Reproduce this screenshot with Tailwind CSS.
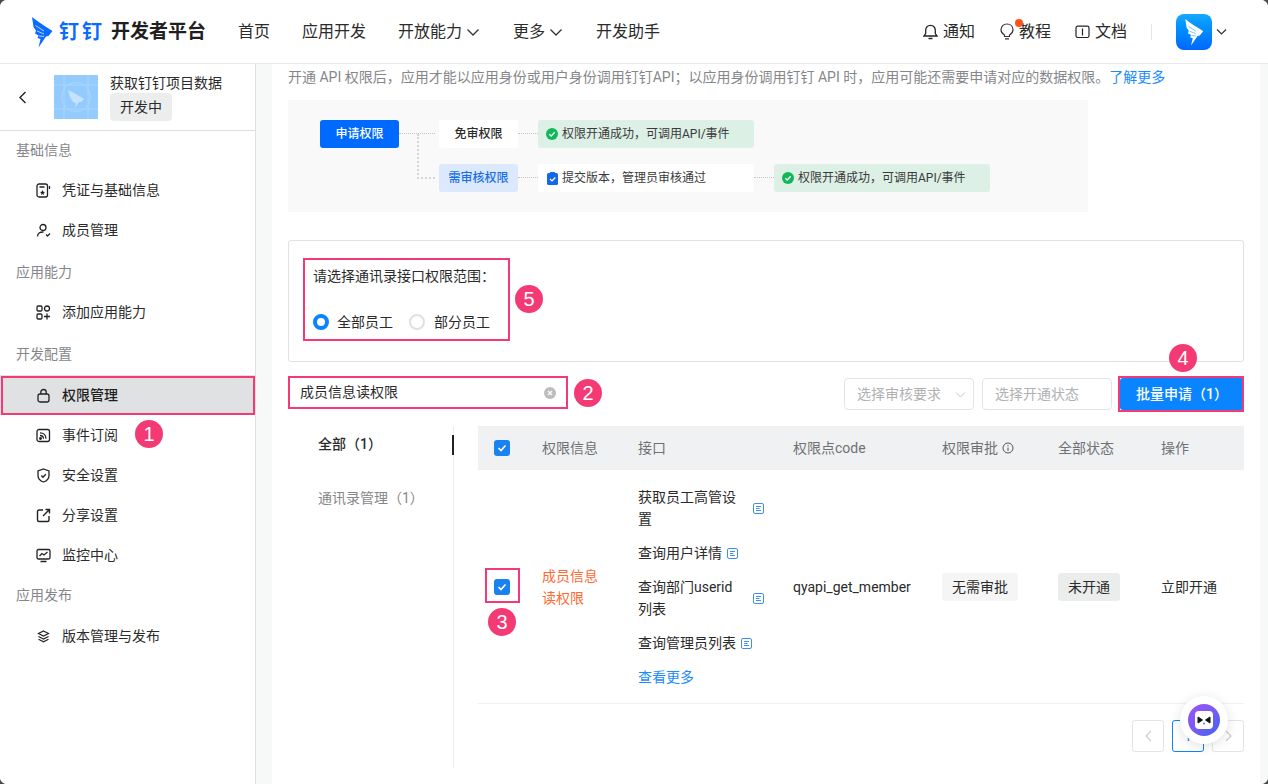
<!DOCTYPE html>
<html lang="zh-CN">
<head>
  <meta charset="UTF-8" />
  <title>钉钉开发者平台 – 权限管理</title>
  <script src="https://cdn.jsdelivr.net/npm/@tailwindcss/browser@4"></script>
</head>
<body class="bg-[#4a4a4a] font-['Roboto','Noto_Sans_CJK_SC',sans-serif] text-[14px] text-[#2b2b2b]">
<div class="relative w-[1268px] h-[784px] overflow-hidden rounded-[7px] bg-white">

  <!-- top bar -->
  <header class="h-[64px] flex items-center border-b border-[#e8e9ea] bg-white">
    <div class="flex items-center w-[238px] pl-[32px] shrink-0">
      <svg class="w-[21px] h-[32px]" viewBox="0 0 21 32"><path d="M0 1 C6 6 13 10 20.500 15 L16.500 20 L14 20.500 L6.500 31.500 L8.500 23 L5.500 22 L6.500 19.500 L3 17.500 L4 14.500 L1.500 11 Z" fill="#0a6cff"/><path d="M3.500 9.500 L12 15 M5 15 L12 18 M7 20 L12 20.500" fill="none" stroke="#fff" stroke-width="0.700"/></svg>
      <span class="ml-[6px] text-[20px] leading-none font-bold text-[#0a6cff] tracking-[3px]">钉钉</span>
      <span class="ml-[6px] text-[19px] leading-none font-bold text-[#1f1f1f]">开发者平台</span>
    </div>
    <nav class="flex items-center gap-[32px] text-[16px] text-[#2b2b2b]">
      <a>首页</a>
      <a>应用开发</a>
      <a class="flex items-center gap-[4px]">开放能力
        <svg class="w-[14px] h-[14px]" viewBox="0 0 14 14" fill="none" stroke="#333" stroke-width="1.300"><path d="M1.500 4.500 L7 10 L12.500 4.500"/></svg>
      </a>
      <a class="flex items-center gap-[4px] ml-[1px]">更多
        <svg class="w-[14px] h-[14px]" viewBox="0 0 14 14" fill="none" stroke="#333" stroke-width="1.300"><path d="M1.500 4.500 L7 10 L12.500 4.500"/></svg>
      </a>
      <a class="ml-[1px]">开发助手</a>
    </nav>
    <div class="ml-auto flex items-center text-[16px] pr-[41px]">
      <span class="flex items-center gap-[5px]">
        <svg class="w-[15px] h-[16px]" viewBox="0 0 15 16" fill="none" stroke="#222" stroke-width="1.300"><path d="M1 12 H14 L12.300 9.500 V6.500 C12.300 3.500 10.300 1.300 7.500 1.300 C4.700 1.300 2.700 3.500 2.700 6.500 V9.500 Z M5.500 14.500 H9.500"/></svg>
        通知
      </span>
      <span class="relative flex items-center gap-[5px] ml-[25px]">
        <svg class="w-[14px] h-[17px]" viewBox="0 0 14 17" fill="none" stroke="#333" stroke-width="1.200"><path d="M4.500 12 C2.500 10.800 1 9 1 6.800 C1 3.500 3.500 1 7 1 C10.500 1 13 3.500 13 6.800 C13 9 11.500 10.800 9.500 12 V13.500 H4.500 Z M5 15.800 H9"/></svg>
        教程
        <i class="absolute left-[15px] -top-[1px] w-[8px] h-[8px] rounded-full bg-[#ff5219]"></i>
      </span>
      <span class="flex items-center gap-[5px] ml-[24px]">
        <svg class="w-[15px] h-[14px]" viewBox="0 0 15 14" fill="none" stroke="#222" stroke-width="1.200"><rect x="1" y="1.200" width="13" height="11.300" rx="1.800"/><path d="M7.500 3.500 V10.500"/></svg>
        文档
      </span>
      <i class="w-px h-[16px] bg-[#e3e4e5] ml-[24px]"></i>
      <span class="ml-[24px] w-[36px] h-[36px] rounded-[8px] bg-gradient-to-b from-[#18a8ff] to-[#0066ff] flex items-center justify-center">
        <svg class="w-[21px] h-[28px]" viewBox="0 0 21 32"><path d="M0 1 C6 6 13 10 20.500 15 L16.500 20 L14 20.500 L6.500 31.500 L8.500 23 L5.500 22 L6.500 19.500 L3 17.500 L4 14.500 L1.500 11 Z" fill="#fff"/><path d="M3.500 9.500 L12 15 M5 15 L12 18 M7 20 L12 20.500" fill="none" stroke="#4aa8ff" stroke-width="0.800"/></svg>
      </span>
      <svg class="w-[11px] h-[11px] ml-[4px]" viewBox="0 0 11 11" fill="none" stroke="#333" stroke-width="1.200"><path d="M1 3.500 L5.500 8 L10 3.500"/></svg>
    </div>
  </header>

  <div class="flex h-[720px]">
    <!-- sidebar -->
    <aside class="w-[256px] shrink-0 border-r border-[#dfe0e1] bg-white">
      <div class="h-[67px] flex items-center border-b border-[#dcdddf] pl-[18px]">
        <svg class="w-[9px] h-[13px]" viewBox="0 0 9 13" fill="none" stroke="#222" stroke-width="1.400"><path d="M7.500 1 L2 6.500 L7.500 12"/></svg>
        <div class="relative ml-[27px] w-[44px] h-[44px] bg-[#93cbfd] overflow-hidden flex items-center justify-center">
          <svg class="w-[44px] h-[44px]" viewBox="0 0 44 44" fill="none" stroke="#b4dbfe" stroke-width="0.700"><circle cx="22" cy="22" r="14.500"/><path d="M0 10 H44 M0 34 H44 M10 0 V44 M34 0 V44"/><path d="M14 15 C20 18 25 21 30 24 L27 27 L25 27 L21 33 L22 28 L19 27 L16 22 Z" fill="#c5e3fe" stroke="none"/></svg>
        </div>
        <div class="ml-[12px]">
          <div class="text-[14px] leading-[20px] text-[#2b2b2b] -mt-[1px]">获取钉钉项目数据</div>
          <div class="w-[62px] h-[28px] rounded-[4px] bg-[#eceded] text-center leading-[28px]">开发中</div>
        </div>
      </div>

      <div class="text-[14px]">
        <div class="h-[39px] pl-[16px] flex items-center text-[#85878a]">基础信息</div>
        <div class="h-[40px] pl-[36px] flex items-center gap-[11px]">
          <svg class="w-[15px] h-[15px]" viewBox="0 0 15 15" fill="none" stroke="#222" stroke-width="1.300"><rect x="1" y="1" width="10.500" height="13" rx="2"/><path d="M3.500 4 H8.500"/><path d="M6.500 7 L7.300 8.800 L9 9 L7.700 10.200 L8 12 L6.500 11 L5 12 L5.300 10.200 L4 9 L5.700 8.800 Z" fill="#222" stroke="none"/><path d="M13.500 3 V6"/></svg>
          <span>凭证与基础信息</span>
        </div>
        <div class="h-[40px] pl-[36px] flex items-center gap-[11px]">
          <svg class="w-[15px] h-[15px]" viewBox="0 0 15 15" fill="none" stroke="#222" stroke-width="1.300"><circle cx="7" cy="4.500" r="3"/><path d="M1.500 13.500 C1.500 10.500 4 8.800 7.500 9 M10 11.500 L11.500 13 L14 10.500"/></svg>
          <span>成员管理</span>
        </div>
        <div class="h-[40px] mt-[2px] pl-[16px] flex items-center text-[#85878a]">应用能力</div>
        <div class="h-[40px] pl-[36px] flex items-center gap-[11px]">
          <svg class="w-[15px] h-[15px]" viewBox="0 0 15 15" fill="none" stroke="#222" stroke-width="1.300"><rect x="1" y="1" width="5" height="5" rx="1.200"/><circle cx="11" cy="3.500" r="2.500"/><rect x="1" y="9" width="5" height="5" rx="1.200"/><path d="M11 8.500 V14.500 M8 11.500 H14"/></svg>
          <span>添加应用能力</span>
        </div>
        <div class="h-[40px] mt-[2px] pl-[16px] flex items-center text-[#85878a]">开发配置</div>
        <div class="h-[40px] mt-[1px] pl-[36px] flex items-center gap-[11px] bg-[#e0e1e3]">
          <svg class="w-[15px] h-[15px]" viewBox="0 0 15 15" fill="none" stroke="#222" stroke-width="1.300"><rect x="2" y="6" width="11" height="8" rx="2"/><path d="M4.800 6 V4 C4.800 2.500 6 1.500 7.500 1.500 C9 1.500 10.200 2.500 10.200 4 V6"/></svg>
          <span class="font-medium text-[#1f1f1f]">权限管理</span>
        </div>
        <div class="h-[40px] pl-[36px] flex items-center gap-[11px]">
          <svg class="w-[15px] h-[15px]" viewBox="0 0 15 15" fill="none" stroke="#222" stroke-width="1.300"><rect x="1" y="1.500" width="12.500" height="12" rx="2"/><path d="M4 4.800 C7.500 4.800 10 7.300 10 10.800 M4 7.500 C6 7.500 7.500 9 7.500 10.800"/><circle cx="4.500" cy="10.500" r="0.800" fill="#222"/></svg>
          <span>事件订阅</span>
        </div>
        <div class="h-[40px] pl-[36px] flex items-center gap-[11px]">
          <svg class="w-[15px] h-[15px]" viewBox="0 0 15 15" fill="none" stroke="#222" stroke-width="1.300"><path d="M7.500 1 L13 3 V7.500 C13 10.800 10.500 13 7.500 14 C4.500 13 2 10.800 2 7.500 V3 Z M5.300 7.500 L7 9.200 L9.800 6.300"/></svg>
          <span>安全设置</span>
        </div>
        <div class="h-[40px] pl-[36px] flex items-center gap-[11px]">
          <svg class="w-[15px] h-[15px]" viewBox="0 0 15 15" fill="none" stroke="#222" stroke-width="1.400"><path d="M7 2 H3 Q1.500 2 1.500 3.500 V12 Q1.500 13.500 3 13.500 H11.500 Q13 13.500 13 12 V8 M7 8 L13.500 1.500 M9.500 1.500 H13.500 V5.500"/></svg>
          <span>分享设置</span>
        </div>
        <div class="h-[40px] pl-[36px] flex items-center gap-[11px]">
          <svg class="w-[15px] h-[15px]" viewBox="0 0 15 15" fill="none" stroke="#222" stroke-width="1.300"><rect x="1" y="1.500" width="13" height="9.500" rx="1.500"/><path d="M3.500 8 L6 5.500 L8 7 L11.500 4 M4.500 13.500 H10.500"/></svg>
          <span>监控中心</span>
        </div>
        <div class="h-[41px] pl-[16px] flex items-center text-[#85878a]">应用发布</div>
        <div class="h-[40px] pl-[36px] flex items-center gap-[11px]">
          <svg class="w-[15px] h-[15px]" viewBox="0 0 15 15" fill="none" stroke="#222" stroke-width="1.200"><path d="M7.500 2 L12.500 4.500 L7.500 7 L2.500 4.500 Z M2.500 7.500 L7.500 10 L12.500 7.500 M2.500 10.300 L7.500 12.800 L12.500 10.300"/></svg>
          <span>版本管理与发布</span>
        </div>
      </div>
    </aside>

    <!-- page body -->
    <main class="flex-1 bg-[#f7f8f8] pl-[16px] pr-[8px]">
      <div class="h-full bg-white px-[16px]">
        <p class="h-[26px] leading-[26px] text-[#85878a] whitespace-nowrap">开通 API 权限后，应用才能以应用身份或用户身份调用钉钉API；以应用身份调用钉钉 API 时，应用可能还需要申请对应的数据权限。<a class="text-[#1a8cff]">了解更多</a></p>

        <!-- flow diagram -->
        <div class="mt-[10px] w-[800px] h-[112px] bg-[#f9f9fa] pl-[32px] pt-[20px] text-[12px]">
          <div class="flex items-start">
            <div class="w-[79px] h-[28px] rounded-[3px] bg-[#006aff] text-white font-medium flex items-center justify-center">申请权限</div>
            <div class="relative w-[40px] h-[28px] shrink-0">
              <i class="absolute left-0 right-[4px] top-[13px] border-t border-dotted border-[#c4c5c7]"></i>
              <i class="absolute left-[18px] top-[14px] h-[45px] w-[18px] border-l-2 border-b-2 border-dotted border-[#d5d6d8]"></i>
            </div>
            <div class="w-[79px] h-[28px] rounded-[3px] bg-white font-medium flex items-center justify-center">免审权限</div>
            <i class="w-[20px] mt-[13px] border-t border-dotted border-[#c4c5c7]"></i>
            <div class="w-[216px] h-[28px] rounded-[3px] bg-[#dcf0e5] flex items-center pl-[8px] gap-[4px] text-[#3a3a3a]">
              <svg class="w-[12px] h-[12px]" viewBox="0 0 12 12"><circle cx="6" cy="6" r="6" fill="#10b858"/><path d="M3.300 6.200 L5.200 8 L8.700 4.300" fill="none" stroke="#fff" stroke-width="1.300"/></svg>
              权限开通成功，可调用API/事件
            </div>
          </div>
          <div class="flex items-start mt-[16px] pl-[119px]">
            <div class="w-[79px] h-[28px] rounded-[3px] bg-[#dce8fb] text-[#1a6fe8] font-medium flex items-center justify-center">需审核权限</div>
            <i class="w-[20px] mt-[13px] border-t border-dotted border-[#c4c5c7]"></i>
            <div class="w-[216px] h-[28px] rounded-[3px] bg-white flex items-center pl-[9px] gap-[4px] text-[#3a3a3a]">
              <svg class="w-[11px] h-[13px]" viewBox="0 0 11 13"><rect x="0" y="1" width="11" height="12" rx="1.500" fill="#1269e8"/><rect x="3" y="0" width="5" height="2.500" rx="0.500" fill="#1269e8"/><path d="M3 7 L5 9 L8.300 5.500" fill="none" stroke="#fff" stroke-width="1.200"/></svg>
              提交版本，管理员审核通过
            </div>
            <i class="w-[20px] mt-[13px] border-t border-dotted border-[#c4c5c7]"></i>
            <div class="w-[216px] h-[28px] rounded-[3px] bg-[#dcf0e5] flex items-center pl-[8px] gap-[4px] text-[#3a3a3a]">
              <svg class="w-[12px] h-[12px]" viewBox="0 0 12 12"><circle cx="6" cy="6" r="6" fill="#10b858"/><path d="M3.300 6.200 L5.200 8 L8.700 4.300" fill="none" stroke="#fff" stroke-width="1.300"/></svg>
              权限开通成功，可调用API/事件
            </div>
          </div>
        </div>

        <!-- scope card -->
        <div class="mt-[28px] h-[122px] rounded-[3px] border border-[#e0e1e2] pl-[24px] pt-[25px]">
          <div class="leading-[20px]">请选择通讯录接口权限范围：</div>
          <div class="mt-[26px] flex items-center h-[20px]">
            <i class="w-[16px] h-[16px] rounded-full border-[4px] border-[#0a84ff] bg-white"></i>
            <span class="ml-[8px]">全部员工</span>
            <i class="ml-[16px] w-[16px] h-[16px] rounded-full border-2 border-[#dfe0e1] bg-white"></i>
            <span class="ml-[9px]">部分员工</span>
          </div>
        </div>

        <!-- filters -->
        <div class="mt-[14px] h-[36px] flex items-start">
          <div class="w-[280px] h-[33px] flex items-center pl-[12px] pr-[12px]">
            <span>成员信息读权限</span>
            <i class="ml-auto w-[12px] h-[12px] rounded-full bg-[#bcbdbf] flex items-center justify-center">
              <svg class="w-[6px] h-[6px]" viewBox="0 0 6 6" stroke="#fff" stroke-width="1.200"><path d="M1 1 L5 5 M5 1 L1 5"/></svg>
            </i>
          </div>
          <div class="ml-auto flex items-start pt-[2px]">
            <div class="w-[130px] h-[32px] rounded-[4px] border border-[#e3e4e5] flex items-center pl-[12px] text-[#b0b1b3]">
              选择审核要求
              <svg class="ml-[14px] w-[11px] h-[11px]" viewBox="0 0 11 11" fill="none" stroke="#c4c5c7" stroke-width="1"><path d="M1 3.500 L5.500 8 L10 3.500"/></svg>
            </div>
            <div class="ml-[8px] w-[130px] h-[32px] rounded-[4px] border border-[#e3e4e5] flex items-center pl-[12px] text-[#b0b1b3]">选择开通状态</div>
            <div class="ml-[8px] w-[124px] h-[32px] rounded-[3px] bg-[#0a84ff] text-white font-medium flex items-center justify-center">批量申请（1）</div>
          </div>
        </div>

        <!-- tabs + table -->
        <div class="mt-[14px] flex">
          <div class="relative w-[166px] h-[342px] border-r border-[#eeeeef] pl-[30px] shrink-0">
            <div class="h-[36px] leading-[36px] font-medium">全部（1）</div>
            <div class="mt-[18px] h-[36px] leading-[36px] text-[#85878a]">通讯录管理（1）</div>
            <i class="absolute right-[-1px] top-[9px] w-[2px] h-[20px] bg-[#222]"></i>
          </div>
          <div class="ml-[24px] flex-1">
            <div class="grid grid-cols-[64px_96px_155px_149px_116px_103px_83px] h-[44px] items-center bg-[#f0f1f2] text-[#6f7174]">
              <div class="pl-[16px]">
                <span class="w-[16px] h-[16px] rounded-[3px] bg-[#1a82f0] flex items-center justify-center">
                  <svg class="w-[10px] h-[10px]" viewBox="0 0 10 10" fill="none" stroke="#fff" stroke-width="1.600"><path d="M1.500 5 L4 7.500 L8.500 2.500"/></svg>
                </span>
              </div>
              <div>权限信息</div>
              <div>接口</div>
              <div>权限点code</div>
              <div class="flex items-center gap-[4px]">权限审批
                <svg class="w-[12px] h-[12px]" viewBox="0 0 12 12" fill="none" stroke="#555" stroke-width="1"><circle cx="6" cy="6" r="5"/><path d="M6 5.500 V9 M6 3 V4.200"/></svg>
              </div>
              <div>全部状态</div>
              <div>操作</div>
            </div>
            <div class="grid grid-cols-[64px_96px_155px_149px_116px_103px_83px] items-center border-b border-[#f0f1f2] pt-[16px] pb-[15px]">
              <div class="pl-[16px]">
                <span class="w-[16px] h-[16px] rounded-[3px] bg-[#1a82f0] flex items-center justify-center">
                  <svg class="w-[10px] h-[10px]" viewBox="0 0 10 10" fill="none" stroke="#fff" stroke-width="1.600"><path d="M1.500 5 L4 7.500 L8.500 2.500"/></svg>
                </span>
              </div>
              <div class="w-[60px] leading-[22px] text-[#ff6a33]">成员信息读权限</div>
              <div class="leading-[22px] flex flex-col gap-[12px]">
                <div class="flex items-center"><span class="w-[110px]">获取员工高管设置</span>
                  <svg class="ml-[5px] w-[11px] h-[11px]" viewBox="0 0 11 11" fill="none" stroke="#3f8ef5" stroke-width="1"><rect x="0.500" y="0.500" width="10" height="10" rx="1.500"/><path d="M3 3.500 H8 M3 5.500 H6.500 M3 7.500 H8"/></svg>
                </div>
                <div class="flex items-center"><span>查询用户详情</span>
                  <svg class="ml-[5px] w-[11px] h-[11px]" viewBox="0 0 11 11" fill="none" stroke="#3f8ef5" stroke-width="1"><rect x="0.500" y="0.500" width="10" height="10" rx="1.500"/><path d="M3 3.500 H8 M3 5.500 H6.500 M3 7.500 H8"/></svg>
                </div>
                <div class="flex items-center"><span class="w-[110px]">查询部门userid 列表</span>
                  <svg class="ml-[5px] w-[11px] h-[11px]" viewBox="0 0 11 11" fill="none" stroke="#3f8ef5" stroke-width="1"><rect x="0.500" y="0.500" width="10" height="10" rx="1.500"/><path d="M3 3.500 H8 M3 5.500 H6.500 M3 7.500 H8"/></svg>
                </div>
                <div class="flex items-center"><span>查询管理员列表</span>
                  <svg class="ml-[5px] w-[11px] h-[11px]" viewBox="0 0 11 11" fill="none" stroke="#3f8ef5" stroke-width="1"><rect x="0.500" y="0.500" width="10" height="10" rx="1.500"/><path d="M3 3.500 H8 M3 5.500 H6.500 M3 7.500 H8"/></svg>
                </div>
                <a class="text-[#1a8cff]">查看更多</a>
              </div>
              <div>qyapi_get_member</div>
              <div><span class="inline-block w-[76px] h-[28px] leading-[28px] text-center rounded-[3px] bg-[#f5f5f6]">无需审批</span></div>
              <div><span class="inline-block w-[62px] h-[28px] leading-[28px] text-center rounded-[3px] bg-[#ebecec]">未开通</span></div>
              <div>立即开通</div>
            </div>
            <!-- pagination -->
            <div class="mt-[16px] flex justify-end gap-[8px]">
              <span class="w-[32px] h-[32px] rounded-[3px] border border-[#e3e4e5] flex items-center justify-center">
                <svg class="w-[7px] h-[12px]" viewBox="0 0 7 12" fill="none" stroke="#c9cacc" stroke-width="1.100"><path d="M6 1 L1 6 L6 11"/></svg>
              </span>
              <span class="w-[32px] h-[32px] rounded-[3px] border border-[#0a84ff] flex items-center justify-center text-[#0a84ff]">1</span>
              <span class="w-[32px] h-[32px] rounded-[3px] border border-[#e3e4e5] flex items-center justify-center">
                <svg class="w-[7px] h-[12px]" viewBox="0 0 7 12" fill="none" stroke="#c9cacc" stroke-width="1.100"><path d="M1 1 L6 6 L1 11"/></svg>
              </span>
            </div>
          </div>
        </div>
      </div>
    </main>
  </div>

  <!-- annotation frames drawn over the screenshot -->
  <div class="absolute left-[1px] top-[376px] w-[254px] h-[39px] border-2 border-[#f43a74]"></div>
  <div class="absolute left-[303px] top-[258px] w-[207px] h-[83px] border-2 border-[#f43a74]"></div>
  <div class="absolute left-[288px] top-[376px] w-[280px] h-[33px] border-2 border-[#f43a74]"></div>
  <div class="absolute left-[485px] top-[568px] w-[35px] h-[35px] border-2 border-[#f43a74]"></div>
  <div class="absolute left-[1118px] top-[376px] w-[126px] h-[36px] border-2 border-[#f43a74]"></div>

  <div class="absolute left-[135px] top-[420px] w-[28px] h-[28px] rounded-full bg-[#f43a74] text-white text-[20px] leading-[28px] text-center font-['Liberation_Sans',sans-serif]">1</div>
  <div class="absolute left-[574px] top-[379px] w-[28px] h-[28px] rounded-full bg-[#f43a74] text-white text-[20px] leading-[28px] text-center font-['Liberation_Sans',sans-serif]">2</div>
  <div class="absolute left-[488px] top-[608px] w-[28px] h-[28px] rounded-full bg-[#f43a74] text-white text-[20px] leading-[28px] text-center font-['Liberation_Sans',sans-serif]">3</div>
  <div class="absolute left-[1169px] top-[344px] w-[28px] h-[28px] rounded-full bg-[#f43a74] text-white text-[20px] leading-[28px] text-center font-['Liberation_Sans',sans-serif]">4</div>
  <div class="absolute left-[515px] top-[285px] w-[28px] h-[28px] rounded-full bg-[#f43a74] text-white text-[20px] leading-[28px] text-center font-['Liberation_Sans',sans-serif]">5</div>

  <!-- floating assistant button -->
  <div class="absolute left-[1180px] top-[696px] w-[48px] h-[48px] rounded-full bg-white shadow-[0_2px_12px_rgba(0,0,0,0.12)] flex items-center justify-center">
    <span class="w-[32px] h-[32px] rounded-full bg-gradient-to-br from-[#a050f5] to-[#3a62f5] flex items-center justify-center">
      <span class="w-[18px] h-[18px] rounded-[4px] bg-white flex items-center justify-center">
        <svg class="w-[14px] h-[10px]" viewBox="0 0 14 10"><path d="M1 2 L5.500 5 L1 8 Z M13 2 L8.500 5 L13 8 Z" fill="#111" stroke="#111" stroke-width="1"/><circle cx="7" cy="8.500" r="1" fill="#2a8cf5"/></svg>
      </span>
    </span>
  </div>
</div>
</body>
</html>
